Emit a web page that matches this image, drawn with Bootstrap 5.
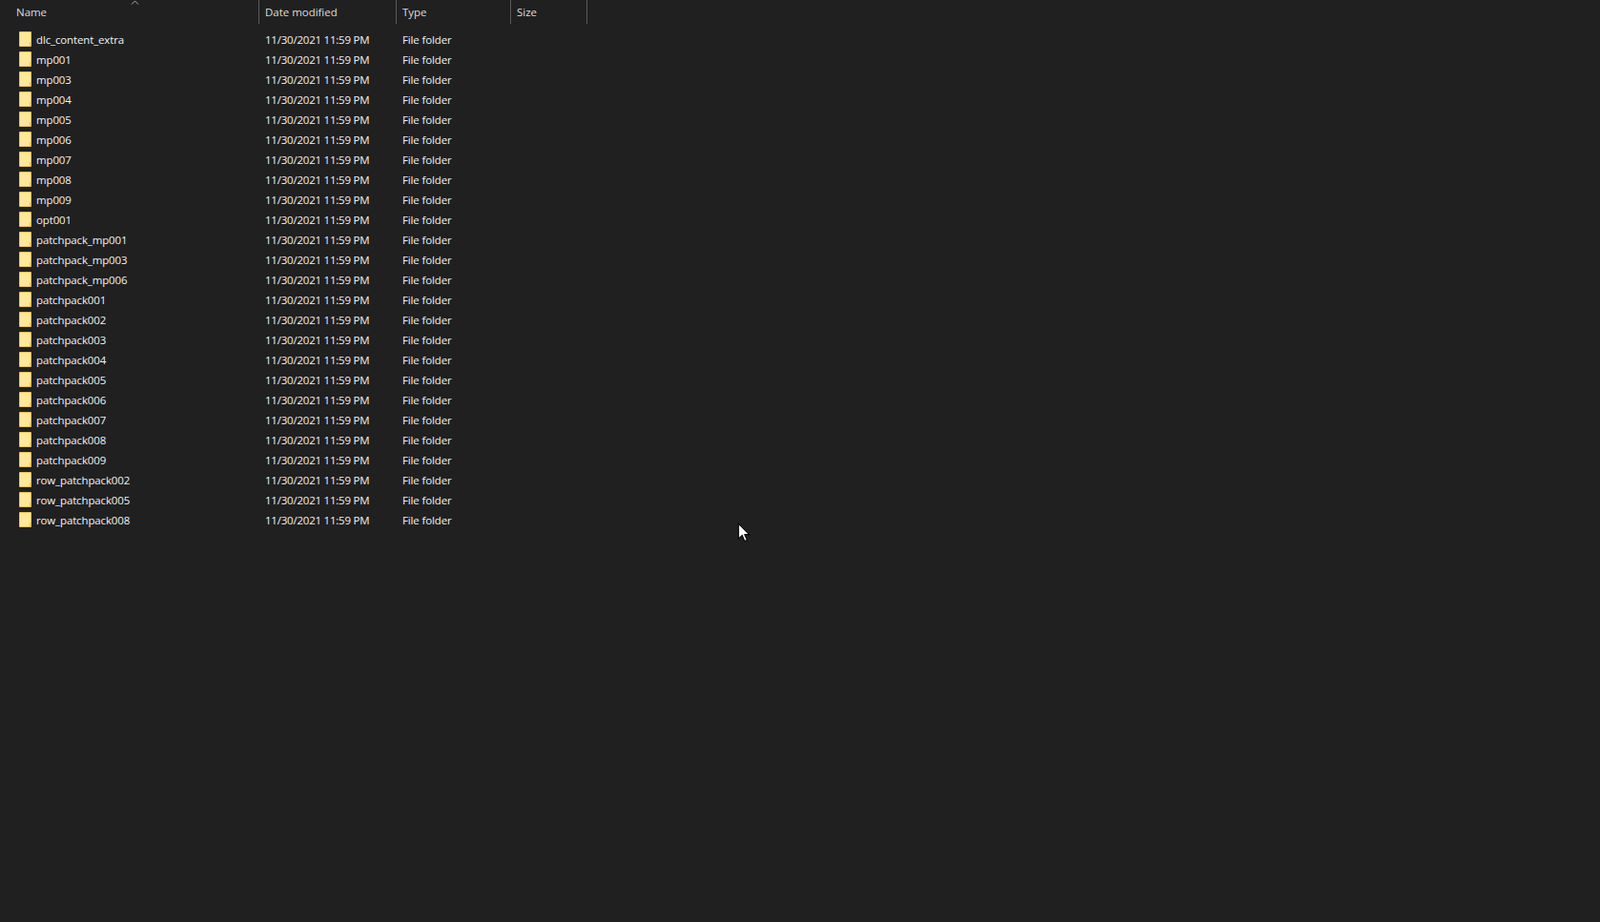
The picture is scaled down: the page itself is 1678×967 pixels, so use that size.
<!DOCTYPE html>
<html lang="en">
<head>
    <meta charset="UTF-8">
    <title>File list</title>
    <link rel="stylesheet" href="https://cdn.jsdelivr.net/npm/bootstrap@5.3.0/dist/css/bootstrap.min.css">
    <style>
        html, body { height: 100%; }
        body { background: #202020; color: #fff; font-family: "Open Sans", "Noto Sans", sans-serif; font-size: 11.5px; letter-spacing: -.14px; overflow: hidden; }
        .page { position: relative; height: 967px; }
        .head-row { height: 25px; margin-bottom: 6px; color: #dedede; letter-spacing: -.03px; }
        .file-row { height: 21px; line-height: 21px; white-space: nowrap; color: #f2f2f2; }
        .col-name { width: 272px; }
        .col-date { width: 144px; }
        .col-type { width: 120px; }
        .col-size { width: 80px; }
        .head-row > div { position: relative; line-height: 26px; padding-left: 6px; border-right: 1px solid #5a5a5a; }
        .head-row > .col-name { padding-left: 17px; }
        .file-row > div { padding-left: 6px; }
        .file-row > .col-date { letter-spacing: -.22px; }
        .file-row > .col-name { padding-left: 20px; display: flex; align-items: center; gap: 5px; }
        .sort-caret { position: absolute; left: 137px; top: 0; }
        .folder-icon { flex: none; margin-bottom: 1px; }
        .mouse-cursor { position: absolute; left: 773px; top: 548px; }
    </style>
</head>
<body>
<div class="page">
    <div class="head-row d-flex">
        <div class="col-name">Name
            <svg class="sort-caret" width="9" height="5" viewBox="0 0 9 5"><path d="M1 4.5 4.5 1 8 4.5" fill="none" stroke="#a8a8a8" stroke-width="1"/></svg>
        </div>
        <div class="col-date">Date modified</div>
        <div class="col-type">Type</div>
        <div class="col-size">Size</div>
    </div>
    <div id="fileList"></div>
    <svg class="mouse-cursor" width="15" height="22" viewBox="0 0 14 20">
        <path d="M1.5 1V15.5L5 12.3 7.4 18 9.8 17 7.4 11.5H12Z" fill="#fff" stroke="#000" stroke-width="1"/>
    </svg>
</div>

<script>
const names = ['dlc_content_extra', 'mp001', 'mp003', 'mp004', 'mp005', 'mp006', 'mp007', 'mp008', 'mp009', 'opt001',
    'patchpack_mp001', 'patchpack_mp003', 'patchpack_mp006', 'patchpack001', 'patchpack002', 'patchpack003',
    'patchpack004', 'patchpack005', 'patchpack006', 'patchpack007', 'patchpack008', 'patchpack009',
    'row_patchpack002', 'row_patchpack005', 'row_patchpack008'];

const folder = `<svg class="folder-icon" width="13" height="16" viewBox="0 0 13 16">
    <rect x="0" y="0" width="13" height="16" rx="1" fill="#eec458"/>
    <rect x="1" y="1" width="11" height="14" fill="#ffe89c"/>
    <rect x="11" y="11" width="1" height="4" fill="#eec458"/>
</svg>`;

const list = document.getElementById('fileList');
names.forEach(name => {
    list.innerHTML += `
        <div class="file-row d-flex">
            <div class="col-name">${folder}<span>${name}</span></div>
            <div class="col-date">11/30/2021 11:59 PM</div>
            <div class="col-type">File folder</div>
            <div class="col-size"></div>
        </div>`;
});
</script>
</body>
</html>
